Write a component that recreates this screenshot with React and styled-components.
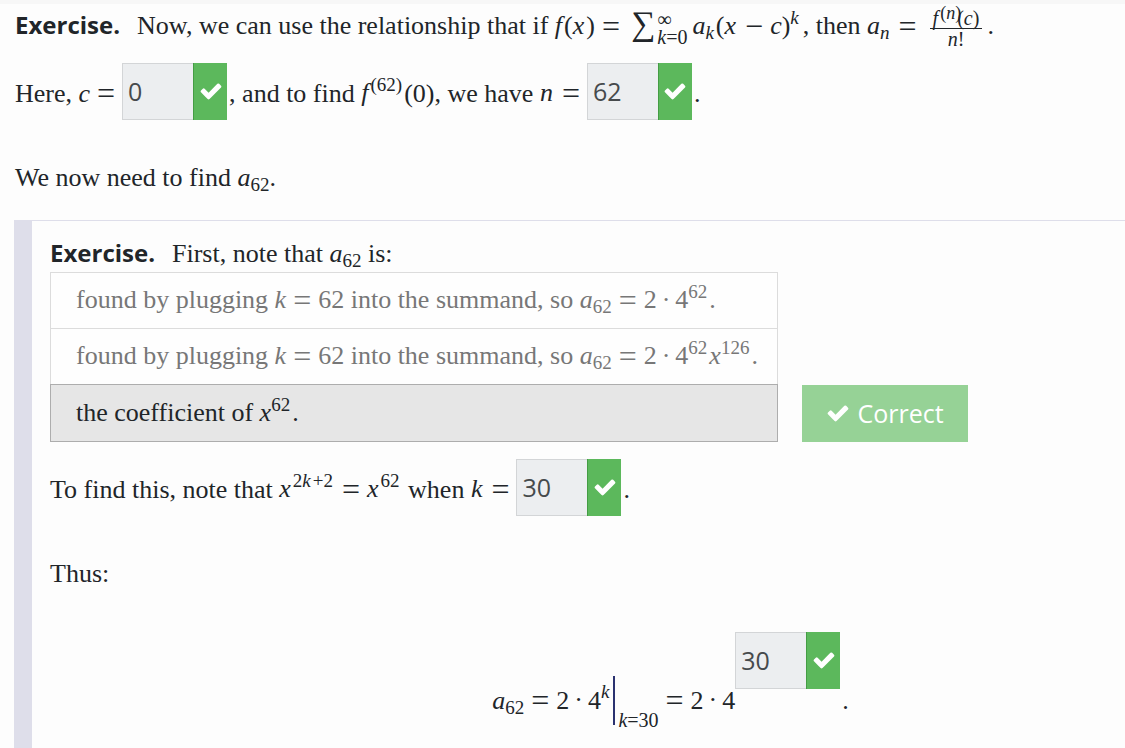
import React, { useState } from 'react';
import styled, { createGlobalStyle } from 'styled-components';

const GlobalStyle = createGlobalStyle`
  * {
    box-sizing: border-box;
  }

  body {
    margin: 0;
    background: #fdfdfd;
    color: #212529;
    font-family: 'Liberation Serif', 'Times New Roman', serif;
    font-size: 26px;
    line-height: 36px;
  }
`;

const Page = styled.main`
  border-top: 4px solid #f7f7f7;
  overflow: hidden;
`;

const Intro = styled.div`
  padding-left: 15px;
`;

const Paragraph = styled.p`
  margin: 0 0 ${({ $gap }) => $gap || 0}px;
  line-height: ${({ $tall }) => ($tall ? 44 : 36)}px;
  white-space: nowrap;
`;

const Title = styled.strong`
  margin-right: 17px;
  font-family: 'Open Sans', 'Noto Sans', sans-serif;
  font-size: 24px;
  font-weight: 700;
  line-height: 0;
`;

const Section = styled.section`
  margin-left: 14px;
  padding: 15px 0 40px 18px;
  border-top: 1px solid #dedeea;
  border-left: 18px solid #dedeea;
`;

const Var = styled.i`
  margin-right: ${({ $gap }) => $gap || 0}px;
`;

const Rel = styled.span`
  margin: 0 7px;
  font-size: 32px;
  line-height: 0;
  vertical-align: -3px;
`;

const Dot = styled.span`
  margin: 0 5px;
`;

const Sup = styled.span`
  margin: 0 2px 0 0;
  font-size: 19px;
  line-height: 0;
  vertical-align: 10px;
`;

const Sub = styled.span`
  font-size: 19px;
  line-height: 0;
  vertical-align: -5px;
`;

const Sum = styled.span`
  margin: 0 2px 0 4px;
  font-size: 34px;
  line-height: 0;
  vertical-align: -1px;
`;

const Limits = styled.span`
  display: inline-flex;
  flex-direction: column;
  margin-right: 5px;
  font-size: 20px;
  line-height: 18px;
  vertical-align: middle;
`;

const Fraction = styled.span`
  display: inline-flex;
  flex-direction: column;
  margin: 0 5px 0 6px;
  font-size: 20px;
  line-height: 20px;
  text-align: center;
  vertical-align: middle;
`;

const Numerator = styled.span`
  padding: 0 3px;
  border-bottom: 1px solid #212529;
`;

const Order = styled.span`
  margin-right: -4px;
  font-size: 18px;
  line-height: 0;
  vertical-align: 6px;
`;

const EvalBar = styled.span`
  display: inline-block;
  height: 49px;
  margin: 0 3px 0 2px;
  border-left: 2px solid #2b3270;
  vertical-align: -17px;
`;

const EvalAt = styled(Sub)`
  font-size: 20px;
  vertical-align: -18px;
`;

const AnswerBox = styled.span`
  display: inline-flex;
  align-items: stretch;
  width: 105px;
  height: 57px;
  margin-right: 2px;
  vertical-align: ${({ $raised }) => ($raised ? '38px' : 'baseline')};
`;

const AnswerInput = styled.input`
  flex: 1;
  min-width: 0;
  padding: 0 5px;
  border: 1px solid #d3d5d7;
  border-right: 0;
  border-radius: 0;
  background: #eceef0;
  color: #464a4c;
  font-family: 'Open Sans', 'Noto Sans', sans-serif;
  font-size: 25px;
`;

const AnswerMark = styled.button`
  display: flex;
  align-items: center;
  justify-content: center;
  width: 34px;
  padding: 0;
  border: 0;
  border-left: 1px solid #449d44;
  background: #5cb85c;
  color: #fff;
`;

const Question = styled.div`
  display: flex;
  align-items: flex-end;
  gap: 24px;
  margin-bottom: 17px;
`;

const Options = styled.div`
  display: flex;
  flex: 0 1 728px;
  flex-direction: column;
  min-width: 0;
`;

const Option = styled.button`
  height: 58px;
  padding: 0 16px 0 25px;
  border: 1px solid ${({ $chosen }) => ($chosen ? '#adadad' : '#dcdcdc')};
  border-bottom-width: ${({ $chosen }) => ($chosen ? 1 : 0)}px;
  background: ${({ $chosen }) => ($chosen ? '#e6e6e6' : '#fefefe')};
  color: ${({ $chosen }) => ($chosen ? '#212529' : '#777')};
  font: inherit;
  text-align: left;
  white-space: nowrap;

  &:not(:last-child) {
    height: 56px;
  }
`;

const CorrectButton = styled.button`
  display: flex;
  align-items: center;
  justify-content: center;
  gap: 7px;
  width: 166px;
  height: 57px;
  padding: 0;
  border: 0;
  background: #96d296;
  color: #fff;
  font-family: 'Open Sans', 'Noto Sans', sans-serif;
  font-size: 25px;
`;

const Equation = styled.div`
  padding-left: 166px;
  text-align: center;
  white-space: nowrap;
`;

const CheckIcon = () => (
  <svg width="24" height="24" viewBox="0 0 1792 1792" fill="currentColor" aria-hidden="true">
    <path d="M1671 566q0 40-28 68l-724 724-136 136q-28 28-68 28t-68-28l-136-136-362-362q-28-28-28-68t28-68l136-136q28-28 68-28t68 28l294 295 656-657q28-28 68-28t68 28l136 136q28 28 28 68z" />
  </svg>
);

const Answer = ({ value, label, raised }) => (
  <AnswerBox $raised={raised}>
    <AnswerInput aria-label={label} defaultValue={value} readOnly />
    <AnswerMark type="button" aria-label="Correct answer">
      <CheckIcon />
    </AnswerMark>
  </AnswerBox>
);

const A62 = () => (
  <>
    <Var>a</Var>
    <Sub>62</Sub>
  </>
);

const Plugging = () => (
  <>
    {'found by plugging '}
    <Var>k</Var>
    <Rel>=</Rel>
    {'62 into the summand, so '}
    <A62 />
    <Rel>=</Rel>
    2
    <Dot>·</Dot>
    4
    <Sup>62</Sup>
  </>
);

const options = [
  <>
    <Plugging />
    .
  </>,
  <>
    <Plugging />
    <Var>x</Var>
    <Sup>126</Sup>
    .
  </>,
  <>
    {'the coefficient of '}
    <Var>x</Var>
    <Sup>62</Sup>
    .
  </>,
];

const App = () => {
  const [chosen, setChosen] = useState(2);

  return (
    <Page>
      <GlobalStyle />
      <Intro>
        <Paragraph $tall $gap={14}>
          <Title>Exercise.</Title>
          {'Now, we can use the relationship that if '}
          <Var $gap={2}>f</Var>
          (
          <Var $gap={2}>x</Var>
          )
          <Rel>=</Rel>
          <Sum>∑</Sum>
          <Limits>
            <span>∞</span>
            <span>
              <Var>k</Var>
              =0
            </span>
          </Limits>
          <Var>a</Var>
          <Sub><Var $gap={2}>k</Var></Sub>
          (
          <Var $gap={2}>x</Var>
          <Rel>−</Rel>
          <Var>c</Var>
          )
          <Sup><Var $gap={2}>k</Var></Sup>
          {', then '}
          <Var>a</Var>
          <Sub><Var $gap={2}>n</Var></Sub>
          <Rel>=</Rel>
          <Fraction>
            <Numerator>
              <Var $gap={2}>f</Var>
              <Order>
                (
                <Var>n</Var>
                )
              </Order>
              (
              <Var>c</Var>
              )
            </Numerator>
            <span>
              <Var>n</Var>
              !
            </span>
          </Fraction>
          .
        </Paragraph>
        <Paragraph $gap={40}>
          {'Here, '}
          <Var>c</Var>
          <Rel>=</Rel>
          <Answer value="0" label="c" />
          {', and to find '}
          <Var $gap={2}>f</Var>
          <Sup>(62)</Sup>
          {'(0), we have '}
          <Var $gap={2}>n</Var>
          <Rel>=</Rel>
          <Answer value="62" label="n" />
          .
        </Paragraph>
        <Paragraph $gap={24}>
          {'We now need to find '}
          <A62 />
          .
        </Paragraph>
      </Intro>
      <Section>
        <Paragraph>
          <Title>Exercise.</Title>
          {'First, note that '}
          <A62 />
          {' is:'}
        </Paragraph>
        <Question>
          <Options>
            {options.map((content, index) => (
              <Option
                key={index}
                type="button"
                aria-pressed={chosen === index}
                $chosen={chosen === index}
                onClick={() => setChosen(index)}
              >
                {content}
              </Option>
            ))}
          </Options>
          <CorrectButton type="button">
            <CheckIcon />
            Correct
          </CorrectButton>
        </Question>
        <Paragraph $gap={40}>
          {'To find this, note that '}
          <Var $gap={2}>x</Var>
          <Sup>
            2
            <Var $gap={2}>k</Var>
            +2
          </Sup>
          <Rel>=</Rel>
          <Var $gap={2}>x</Var>
          <Sup>62</Sup>
          {' when '}
          <Var $gap={2}>k</Var>
          <Rel>=</Rel>
          <Answer value="30" label="k" />
          .
        </Paragraph>
        <Paragraph $gap={40}>Thus:</Paragraph>
        <Equation>
          <A62 />
          <Rel>=</Rel>
          2
          <Dot>·</Dot>
          4
          <Sup><Var>k</Var></Sup>
          <EvalBar />
          <EvalAt>
            <Var>k</Var>
            =30
          </EvalAt>
          <Rel>=</Rel>
          2
          <Dot>·</Dot>
          4
          <Answer value="30" label="exponent" raised />
          .
        </Equation>
      </Section>
    </Page>
  );
};

export default App;
